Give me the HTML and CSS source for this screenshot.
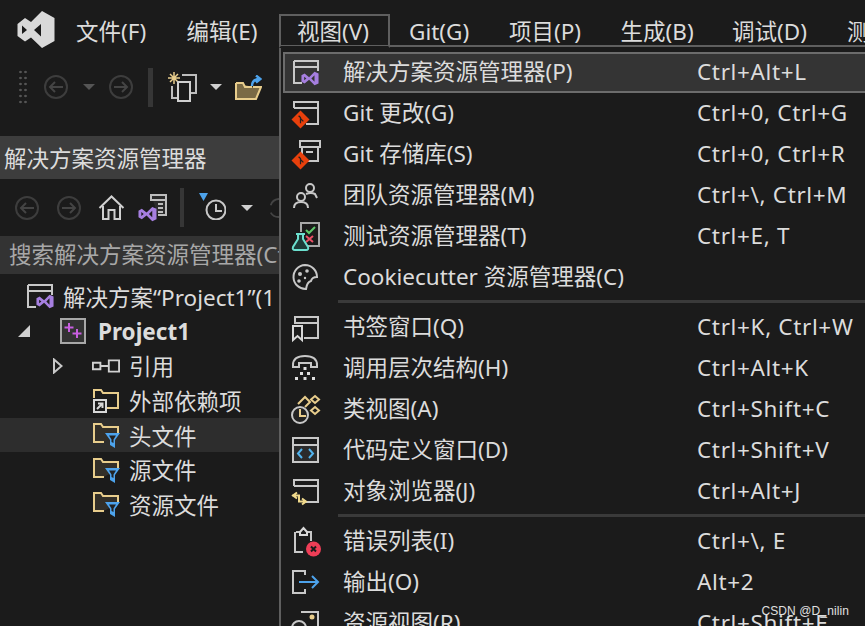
FILE: index.html
```html
<!DOCTYPE html>
<html lang="zh-CN">
<head>
<meta charset="utf-8">
<title>Visual Studio 视图菜单</title>
<link rel="stylesheet" href="styles.css">
</head>
<body>
<svg class="defs" width="0" height="0" aria-hidden="true">
  <defs>
    <symbol id="vs" viewBox="0 0 20 16"><path d="M.5 4.500 4 2.500 9 6.500 15 .5 19.500 2.500V13.500L15 15.500 9 9.500 4 13.500 .5 11.500ZM3.500 6V10L6 8ZM15 4.500 11.500 8 15 11.500Z" fill="#a67fe0" fill-rule="evenodd"/></symbol>
    <symbol id="win-vs" viewBox="0 0 28 28"><path d="M3 3H27V13M3 3V25H11M3 9H27" fill="none" stroke="#c8c8c8" stroke-width="2"/></symbol>
    <symbol id="win-git" viewBox="0 0 28 28"><path d="M3 9V3H27V25H15M3 9H27" fill="none" stroke="#c8c8c8" stroke-width="2"/></symbol>
    <symbol id="git" viewBox="0 0 20 20"><path d="M10 .5 19.500 10 10 19.500 .5 10Z" fill="#e8400c"/><path d="M8 6 10 8V14M10 9 13 12" stroke="#222" stroke-width="1.300" fill="none"/></symbol>
    <symbol id="folder" viewBox="0 0 28 26"><path d="M12 20H2V2H9L11 5H26V12" fill="#332f28" stroke="#e8cd8c" stroke-width="2"/><path d="M13 11H28L23 18V26L18 23V18Z" fill="#4da3ec"/><path d="M17 13.500H24L21.500 17.500V21L19.500 20V17.500Z" fill="#222"/></symbol>
    <symbol id="back" viewBox="0 0 24 24"><circle cx="12" cy="12" r="11" fill="none" stroke="#3d3d3d" stroke-width="2"/><path d="M19 12H6M11 7 6 12 11 17" fill="none" stroke="#444" stroke-width="2"/></symbol>
    <symbol id="fwd" viewBox="0 0 24 24"><circle cx="12" cy="12" r="11" fill="none" stroke="#3d3d3d" stroke-width="2"/><path d="M5 12H18M13 7 18 12 13 17" fill="none" stroke="#444" stroke-width="2"/></symbol>
  </defs>
</svg>
<div class="app">
  <header class="menubar">
    <svg class="logo" viewBox="17 11 38 37" aria-hidden="true"><path d="M17.500 24 25 18 31 22 42 11 54.500 18V41L42 48 31 37.500 25 41.500 17.500 36ZM22 25.500V34L27 30ZM41 24 34 30 41 36.500Z" fill="#d9d9d9" fill-rule="evenodd"/></svg>
    <nav class="menus">
      <span class="menu">文件(F)</span>
      <span class="menu">编辑(E)</span>
      <div class="menu menu-open">
        视图(V)
        <div class="dropdown">
          <div class="row row-active"><svg class="ic"><use href="#win-vs"/></svg><svg class="ic-over vs-over"><use href="#vs"/></svg><span class="label">解决方案资源管理器(P)</span><span class="key">Ctrl+Alt+L</span></div>
          <div class="row"><svg class="ic"><use href="#win-git"/></svg><svg class="ic-over git-over"><use href="#git"/></svg><span class="label">Git 更改(G)</span><span class="key">Ctrl+0, Ctrl+G</span></div>
          <div class="row"><svg class="ic" viewBox="0 0 28 28"><path d="M9 1H29V7H9ZM11 7V21H27V7M15 12H22" fill="none" stroke="#c8c8c8" stroke-width="2"/></svg><svg class="ic-over git-over"><use href="#git"/></svg><span class="label">Git 存储库(S)</span><span class="key">Ctrl+0, Ctrl+R</span></div>
          <div class="row"><svg class="ic" viewBox="0 0 28 28"><g fill="none" stroke="#c8c8c8" stroke-width="2"><circle cx="19" cy="7" r="4"/><path d="M15 13Q20 11 24 13L26 17"/><circle cx="10" cy="16" r="4"/><path d="M3 27Q3 21 10 21T17 27"/></g></svg><span class="label">团队资源管理器(M)</span><span class="key">Ctrl+\, Ctrl+M</span></div>
          <div class="row"><svg class="ic" viewBox="0 0 28 28"><path d="M10 10V1H28V24H17" fill="none" stroke="#a8a8a8" stroke-width="2"/><path d="M15 8 18 11 24 5" fill="none" stroke="#5dc96a" stroke-width="2"/><path d="M15 14 22 20M22 14 15 20" stroke="#ea4f65" stroke-width="2"/><path d="M5 12H14M7 12V17L2 25Q1 28 4 28H15Q18 28 17 25L12 17V12" fill="#1c3c38" stroke="#6ce0cf" stroke-width="2"/></svg><span class="label">测试资源管理器(T)</span><span class="key">Ctrl+E, T</span></div>
          <div class="row"><svg class="ic" viewBox="0 0 28 28"><path d="M14 2A12 12 0 0 1 26 14Q21 14 20 18 16 19 15 26A12 12 0 0 1 14 2Z" fill="none" stroke="#c8c8c8" stroke-width="2"/><circle cx="9" cy="11" r="2" fill="#c8c8c8"/><circle cx="8" cy="18" r="1.800" fill="#c8c8c8"/><circle cx="16" cy="8" r="1.800" fill="#c8c8c8"/><circle cx="14" cy="15" r="1.200" fill="#c8c8c8"/></svg><span class="label">Cookiecutter 资源管理器(C)</span></div>
          <div class="sep"></div>
          <div class="row"><svg class="ic" viewBox="0 0 28 28"><path d="M13 25H27V4H4V11M4 10H27" fill="none" stroke="#c8c8c8" stroke-width="2"/><path d="M2 13H11V27L6.500 23 2 27Z" fill="#1c1c1c" stroke="#d8d8d8" stroke-width="2"/></svg><span class="label">书签窗口(Q)</span><span class="key">Ctrl+K, Ctrl+W</span></div>
          <div class="row"><svg class="ic" viewBox="0 0 28 28"><path d="M2 11Q2 2 14 2T26 11V13H20V9H8V13H2Z" fill="none" stroke="#c8c8c8" stroke-width="2"/><g fill="#e0e0e0"><rect x="12.500" y="13" width="3" height="3"/><rect x="9" y="18" width="3" height="3"/><rect x="16" y="18" width="3" height="3"/><rect x="4" y="23" width="3" height="3"/><rect x="12.500" y="23" width="3" height="3"/><rect x="21" y="23" width="3" height="3"/></g></svg><span class="label">调用层次结构(H)</span><span class="key">Ctrl+Alt+K</span></div>
          <div class="row"><svg class="ic" viewBox="0 0 28 28"><g fill="none" stroke="#e8cd8c" stroke-width="2"><path d="M7 9 14 2 19 7 14 12"/><path d="M24 1 28 4.500 24 8 20 4.500ZM24 12 28 15.500 24 19 20 15.500Z"/></g><circle cx="9" cy="20" r="8" fill="#222" stroke="#c8c8c8" stroke-width="2"/><path d="M9 14V21H15" fill="none" stroke="#e8cd8c" stroke-width="2"/></svg><span class="label">类视图(A)</span><span class="key">Ctrl+Shift+C</span></div>
          <div class="row"><svg class="ic" viewBox="0 0 28 28"><path d="M2 2H27V26H2Z" fill="#2b2b2b" stroke="#c8c8c8" stroke-width="2"/><path d="M2 2H27V9H2Z" fill="#1b1b1b" stroke="#c8c8c8" stroke-width="2"/><path d="M11 13 7 17.500 11 22M18 13 22 17.500 18 22" fill="none" stroke="#52b4ee" stroke-width="2"/></svg><span class="label">代码定义窗口(D)</span><span class="key">Ctrl+Shift+V</span></div>
          <div class="row"><svg class="ic"><use href="#win-git"/></svg><svg class="ic-over obj-over" viewBox="0 0 16 17"><path d="M1 6H8V12H14M6 3 2 6 6 9M11 9 15 12 11 15" fill="none" stroke="#f0d98c" stroke-width="2"/></svg><span class="label">对象浏览器(J)</span><span class="key">Ctrl+Alt+J</span></div>
          <div class="sep"></div>
          <div class="row"><svg class="ic" viewBox="0 0 28 28"><path d="M5 5H20V14M12 25H4V5" fill="none" stroke="#c8c8c8" stroke-width="2"/><path d="M9 5 12.500 1 16 5V8H9Z" fill="#1c1c1c" stroke="#d8d8d8" stroke-width="2"/><circle cx="22.500" cy="22" r="7.500" fill="#ef3e57"/><path d="M20 19.500 25 24.500M25 19.500 20 24.500" stroke="#1b1b1b" stroke-width="2"/></svg><span class="label">错误列表(I)</span><span class="key">Ctrl+\, E</span></div>
          <div class="row"><svg class="ic" viewBox="0 0 28 28"><path d="M14 7V3H2V25H14V21" fill="none" stroke="#c8c8c8" stroke-width="2"/><path d="M8 14H27M21 8 27 14 21 20" fill="none" stroke="#4da3ec" stroke-width="2"/></svg><span class="label">输出(O)</span><span class="key">Alt+2</span></div>
          <div class="row"><svg class="ic" viewBox="0 0 28 28"><path d="M10 3H27V25H10" fill="none" stroke="#c8c8c8" stroke-width="2"/><circle cx="8" cy="19" r="7" fill="#222" stroke="#c8c8c8" stroke-width="2"/><circle cx="21" cy="8" r="2.500" fill="#e8cd8c"/></svg><span class="label">资源视图(R)</span><span class="key">Ctrl+Shift+E</span></div>
        </div>
      </div>
      <span class="menu menu-git">Git(G)</span>
      <span class="menu menu-proj">项目(P)</span>
      <span class="menu menu-build">生成(B)</span>
      <span class="menu menu-debug">调试(D)</span>
      <span class="menu">测试(S)</span>
    </nav>
  </header>

  <div class="toolbar">
    <span class="grip"></span>
    <svg class="tb-ic"><use href="#back"/></svg>
    <span class="caret caret-dim"></span>
    <svg class="tb-ic"><use href="#fwd"/></svg>
    <span class="vbar"></span>
    <svg class="tb-new" viewBox="0 0 30 30"><path d="M6 0V12M0 6H12M2 2 10 10M10 2 2 10" stroke="#e8cd8c" stroke-width="1.500"/><path d="M14 3H28V21H22" fill="none" stroke="#bdbdbd" stroke-width="2"/><path d="M4 14V26H10" fill="none" stroke="#bdbdbd" stroke-width="2"/><path d="M10 10H22V29H10Z" fill="#1b1b1b" stroke="#d0d0d0" stroke-width="2"/></svg>
    <span class="caret caret-new"></span>
    <svg class="tb-open" viewBox="0 0 27 25"><path d="M1 8V24H21L26 12H18M1 8H8L10 12H17" fill="#7a6a45" stroke="#e8cd8c" stroke-width="2"/><path d="M17 11Q17 4 25 4M21 .5 25.500 4 21 7.500" fill="none" stroke="#4da3ec" stroke-width="2.400"/></svg>
  </div>

  <aside class="panel">
    <div class="panel-title">解决方案资源管理器</div>
    <div class="panel-tools">
      <svg class="tb-ic"><use href="#back"/></svg>
      <svg class="tb-ic tool-fwd"><use href="#fwd"/></svg>
      <svg class="tb-home" viewBox="0 0 27 25"><path d="M1.500 13 13.500 1.500 25.500 13M5 11V24H10.500V15H16.500V24H22V11" fill="none" stroke="#d0d0d0" stroke-width="2"/></svg>
      <svg class="tb-sln" viewBox="0 0 29 28"><path d="M13 1H28V21H20" fill="#2b2b2b" stroke="#bdbdbd" stroke-width="2"/><path d="M13 1H28V6H13ZM20 10H25M20 14H25M20 18H25" fill="none" stroke="#bdbdbd" stroke-width="2"/><use href="#vs" x="0" y="12" width="19" height="16"/></svg>
      <span class="vbar vbar-sm"></span>
      <svg class="tb-hist" viewBox="0 0 27 27"><path d="M0 0H9L4.500 8Z" fill="#4da3ec"/><circle cx="17" cy="17" r="9.500" fill="none" stroke="#c8c8c8" stroke-width="2"/><path d="M17 11V18H23" fill="none" stroke="#c8c8c8" stroke-width="2"/></svg>
      <span class="caret caret-tool"></span>
      <svg class="tb-ic tb-sync" viewBox="0 0 26 26"><path d="M4 10A10 10 0 0 1 22 8M22 16A10 10 0 0 1 4 18" fill="none" stroke="#444" stroke-width="2"/></svg>
    </div>
    <div class="search">搜索解决方案资源管理器(Ctrl+;)</div>
    <div class="tree">
      <div class="node lv0"><svg class="tree-ic"><use href="#win-vs"/></svg><svg class="ic-over tree-vs"><use href="#vs"/></svg><span class="nowrap">解决方案“Project1”(1 个项目，共 1 个)</span></div>
      <div class="node lv1"><span class="tri-open"></span><svg class="tree-ic" viewBox="0 0 26 26"><path d="M1 1H25V25H1Z" fill="#333" stroke="#a8a8a8" stroke-width="2"/><path d="M9 5V14M4.500 9.500H13.500M17 11V20M12.500 15.500H21.500" stroke="#c85fe0" stroke-width="2"/></svg><b class="nowrap">Project1</b></div>
      <div class="node lv2"><svg class="tri-closed" viewBox="0 0 10 16"><path d="M1 1.500 8.500 8 1 14.500Z" fill="none" stroke="#c8c8c8" stroke-width="2"/></svg><svg class="tree-ic" viewBox="0 0 30 26"><path d="M1 9.500H9V16.500H1ZM18 7H29V19H18ZM9 13H18" fill="none" stroke="#d0d0d0" stroke-width="2"/></svg><span>引用</span></div>
      <div class="node lv2"><span class="tri-none"></span><svg class="tree-ic" viewBox="0 0 28 26"><path d="M14 21H26V6H11L9 3H2V11" fill="none" stroke="#e8cd8c" stroke-width="2"/><path d="M2 13H14V25H2ZM5 22 10 17M6 16.500H10.500V21" fill="none" stroke="#d8d8d8" stroke-width="2"/></svg><span>外部依赖项</span></div>
      <div class="node lv2 node-hover"><span class="tri-none"></span><svg class="tree-ic"><use href="#folder"/></svg><span>头文件</span></div>
      <div class="node lv2"><span class="tri-none"></span><svg class="tree-ic"><use href="#folder"/></svg><span>源文件</span></div>
      <div class="node lv2"><span class="tri-none"></span><svg class="tree-ic"><use href="#folder"/></svg><span>资源文件</span></div>
    </div>
  </aside>
  <div class="mark">CSDN @D_nilin</div>
</div>
</body>
</html>
```
FILE: styles.css
```css
* { box-sizing: border-box; }
html, body { margin: 0; height: 100%; }
body {
  background: #1b1b1b;
  color: #dcdcdc;
  font-family: "Noto Sans", "Noto Sans CJK SC", sans-serif;
  font-size: 22.5px;
  overflow: hidden;
}
.defs { position: absolute; }
.app { position: relative; width: 865px; height: 626px; overflow: hidden; }

.menubar { display: flex; align-items: center; height: 65px; padding: 0 0 1px 17px; }
.logo { width: 38px; height: 37px; margin: -5px 21px 0 0; flex: none; }
.menus { display: flex; align-items: center; height: 100%; white-space: nowrap; }
.menu { position: relative; flex: none; width: 110.500px; line-height: 32px; margin-top: -1px; }
.menu-open {
  margin: -1px 0 0 -18px;
  padding-left: 18px;
  width: 130px;
}
.menu-open::before {
  content: "";
  position: absolute;
  box-sizing: border-box;
  z-index: 3;
  left: 0; top: -2px;
  width: 111px; height: 34px;
  border: 2px solid #5f5f5f;
  border-bottom-color: #1b1b1b;
  pointer-events: none;
}
.menu-git { width: 100px; }
.menu-proj { width: 111.500px; }
.menu-build { width: 111.500px; }
.menu-debug { width: 115px; }
.dropdown {
  position: absolute;
  z-index: 2;
  left: 0; top: 29px;
  width: 620px;
  padding: 5px 0 0 0;
  background: #1b1b1b;
  border: 2px solid #5f5f5f;
  border-width: 2px 0 0 2px;
}
.row {
  position: relative;
  display: flex;
  align-items: center;
  height: 41px;
  padding-left: 10px;
}
.row-active { background: #343434; outline: 2px solid #6c6c6c; outline-offset: -2px; margin-left: 2px; padding-left: 8px; }
.ic { width: 28px; height: 28px; flex: none; margin-right: 24px; overflow: visible; }
.ic-over { position: absolute; overflow: visible; }
.vs-over { left: 18px; top: 19px; width: 18px; height: 15px; }
.git-over { left: 10px; top: 17px; width: 19px; height: 19px; }
.obj-over { left: 10px; top: 18px; width: 16px; height: 18px; }
.label { flex: none; width: 354px; white-space: nowrap; }
.key { flex: none; white-space: nowrap; letter-spacing: .65px; }
.sep { height: 3px; margin: 2px 0 4px 57px; background: #3a3a3a; }

.toolbar { display: flex; align-items: center; height: 44px; width: 279px; padding-left: 18px; }
.grip {
  width: 10px; height: 36px; margin-right: 16px;
  background-image: radial-gradient(#555 1px, transparent 1.300px);
  background-size: 5px 6px;
  flex: none;
}
.tb-ic { width: 24px; height: 24px; flex: none; }
.caret { width: 0; height: 0; flex: none; border: 6px solid transparent; border-top: 6px solid #d0d0d0; border-bottom: 0; }
.caret-dim { border-top-color: #555; margin: 0 14px 0 15px; }
.caret-new { margin-left: 12px; }
.vbar { width: 5px; height: 39px; background: #363636; margin: 0 15px; flex: none; }
.tb-new { width: 30px; height: 30px; flex: none; }
.tb-open { width: 27px; height: 25px; flex: none; margin-left: 13px; }

.panel { width: 279px; margin-top: 27px; white-space: nowrap; overflow: hidden; }
.panel-title { height: 43px; line-height: 45px; padding-left: 4px; background: #3d3d3d; }
.panel-tools { display: flex; align-items: center; height: 57px; padding-left: 15px; }
.tool-fwd { margin-left: 18px; }
.tb-home { width: 27px; height: 25px; flex: none; margin-left: 17px; }
.tb-sln { width: 29px; height: 28px; flex: none; margin-left: 13px; }
.vbar-sm { width: 4px; margin: 0 0 0 13px; }
.tb-hist { width: 27px; height: 27px; flex: none; margin: -2px 0 0 15px; }
.caret-tool { margin-left: 15px; }
.tb-sync { margin-left: 14px; }
.search { height: 38px; line-height: 38px; padding-left: 9px; background: #333; color: #a8a8a8; }
.tree { padding-top: 5px; }
.node { position: relative; display: flex; align-items: center; height: 34.700px; }
.node-hover { background: #2d2d2d; }
.lv0 { padding-left: 25px; }
.lv1 { padding-left: 18px; }
.lv2 { padding-left: 53px; }
.tree-ic { width: 28px; height: 28px; flex: none; margin-right: 10px; overflow: visible; }
.lv1 .tree-ic { width: 26px; height: 26px; margin: 0 12px 0 30px; }
.lv2 .tree-ic { margin: 0 9px 0 29px; width: 28px; height: 26px; }
.tree-vs { left: 36px; top: 15px; width: 18px; height: 15px; }
.nowrap { white-space: nowrap; }
.tri-open { width: 0; height: 0; flex: none; border-style: solid; border-width: 0 0 12px 12px; border-color: transparent transparent #d0d0d0 transparent; }
.tri-closed { width: 10px; height: 16px; flex: none; }
.tri-none { width: 10px; flex: none; }

.mark { position: absolute; z-index: 5; right: 16px; bottom: 9px; font: 12px/1 "Liberation Sans", sans-serif; color: #e0e0e0; letter-spacing: .1px; }
```
